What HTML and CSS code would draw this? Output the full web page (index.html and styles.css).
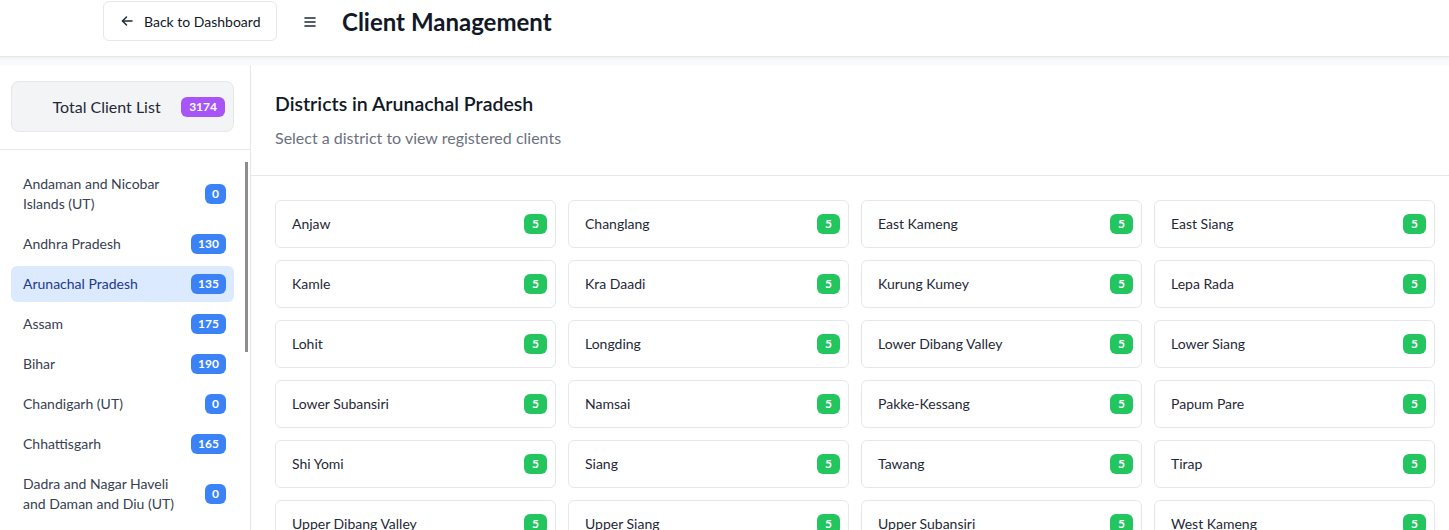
FILE: index.html
```html
<!DOCTYPE html>
<html lang="en">
<head>
<meta charset="utf-8">
<title>Client Management</title>
<link rel="stylesheet" href="styles.css">
</head>
<body>
<header class="topbar">
  <button class="back-btn" type="button">
    <svg class="back-icon" width="12" height="12" viewBox="0 0 12 12" fill="none" stroke="#1f2937" stroke-width="1.5" stroke-linecap="round" stroke-linejoin="round"><path d="M11 6H1.5"/><path d="M5.5 2L1.5 6l4 4"/></svg>
    <span>Back to Dashboard</span>
  </button>
  <svg class="menu-icon" width="14" height="14" viewBox="0 0 14 14" fill="none" stroke="#1f2937" stroke-width="1.6" stroke-linecap="round"><path d="M2 3h10"/><path d="M2 7h10"/><path d="M2 11h10"/></svg>
  <h1 class="page-title">Client Management</h1>
</header>

<div class="layout">
  <aside class="sidebar">
    <div class="total-wrap">
      <div class="total-card">
        <span class="total-label">Total Client List</span>
        <span class="badge badge-purple">3174</span>
      </div>
    </div>
    <div class="list-wrap">
      <nav class="state-list">
        <div class="state-item"><span class="state-name">Andaman and Nicobar Islands (UT)</span><span class="badge badge-blue">0</span></div>
        <div class="state-item"><span class="state-name">Andhra Pradesh</span><span class="badge badge-blue">130</span></div>
        <div class="state-item active"><span class="state-name">Arunachal Pradesh</span><span class="badge badge-blue">135</span></div>
        <div class="state-item"><span class="state-name">Assam</span><span class="badge badge-blue">175</span></div>
        <div class="state-item"><span class="state-name">Bihar</span><span class="badge badge-blue">190</span></div>
        <div class="state-item"><span class="state-name">Chandigarh (UT)</span><span class="badge badge-blue">0</span></div>
        <div class="state-item"><span class="state-name">Chhattisgarh</span><span class="badge badge-blue">165</span></div>
        <div class="state-item"><span class="state-name">Dadra and Nagar Haveli and Daman and Diu (UT)</span><span class="badge badge-blue">0</span></div>
        <div class="state-item"><span class="state-name">Delhi (UT)</span><span class="badge badge-blue">0</span></div>
        <div class="state-item"><span class="state-name">Goa</span><span class="badge badge-blue">10</span></div>
        <div class="state-item"><span class="state-name">Gujarat</span><span class="badge badge-blue">165</span></div>
      </nav>
      <span class="scroll-thumb" aria-hidden="true"></span>
    </div>
  </aside>

  <main class="main">
    <section class="main-head">
      <h2 class="main-title">Districts in Arunachal Pradesh</h2>
      <p class="main-sub">Select a district to view registered clients</p>
    </section>
    <section class="district-grid">
      <div class="district"><span>Anjaw</span><span class="badge badge-green">5</span></div>
      <div class="district"><span>Changlang</span><span class="badge badge-green">5</span></div>
      <div class="district"><span>East Kameng</span><span class="badge badge-green">5</span></div>
      <div class="district"><span>East Siang</span><span class="badge badge-green">5</span></div>
      <div class="district"><span>Kamle</span><span class="badge badge-green">5</span></div>
      <div class="district"><span>Kra Daadi</span><span class="badge badge-green">5</span></div>
      <div class="district"><span>Kurung Kumey</span><span class="badge badge-green">5</span></div>
      <div class="district"><span>Lepa Rada</span><span class="badge badge-green">5</span></div>
      <div class="district"><span>Lohit</span><span class="badge badge-green">5</span></div>
      <div class="district"><span>Longding</span><span class="badge badge-green">5</span></div>
      <div class="district"><span>Lower Dibang Valley</span><span class="badge badge-green">5</span></div>
      <div class="district"><span>Lower Siang</span><span class="badge badge-green">5</span></div>
      <div class="district"><span>Lower Subansiri</span><span class="badge badge-green">5</span></div>
      <div class="district"><span>Namsai</span><span class="badge badge-green">5</span></div>
      <div class="district"><span>Pakke-Kessang</span><span class="badge badge-green">5</span></div>
      <div class="district"><span>Papum Pare</span><span class="badge badge-green">5</span></div>
      <div class="district"><span>Shi Yomi</span><span class="badge badge-green">5</span></div>
      <div class="district"><span>Siang</span><span class="badge badge-green">5</span></div>
      <div class="district"><span>Tawang</span><span class="badge badge-green">5</span></div>
      <div class="district"><span>Tirap</span><span class="badge badge-green">5</span></div>
      <div class="district"><span>Upper Dibang Valley</span><span class="badge badge-green">5</span></div>
      <div class="district"><span>Upper Siang</span><span class="badge badge-green">5</span></div>
      <div class="district"><span>Upper Subansiri</span><span class="badge badge-green">5</span></div>
      <div class="district"><span>West Kameng</span><span class="badge badge-green">5</span></div>
    </section>
  </main>
</div>
</body>
</html>
```

FILE: styles.css
```css
* { box-sizing: border-box; }

html, body {
  margin: 0;
  height: 100%;
  overflow: hidden;
}

body {
  font-family: Lato, "Noto Sans", sans-serif;
  background: #f9fafb;
  color: #1f2937;
}

.topbar {
  height: 57px;
  background: #ffffff;
  border-bottom: 1px solid #e5e7eb;
  box-shadow: 0 1px 3px rgba(0, 0, 0, 0.06);
  display: flex;
  align-items: flex-start;
  padding: 1px 0 0 103px;
  position: relative;
  z-index: 2;
}

.back-btn {
  display: flex;
  align-items: center;
  gap: 11px;
  height: 40px;
  width: 174px;
  padding: 0 0 0 17px;
  background: #ffffff;
  border: 1px solid #e5e7eb;
  border-radius: 6px;
  font-family: inherit;
  font-size: 14px;
  color: #111827;
  white-space: nowrap;
}

.back-icon { flex: none; }

.menu-icon {
  margin: 14px 0 0 26px;
  flex: none;
}

.page-title {
  margin: 5px 0 0 25px;
  font-size: 24px;
  line-height: 32px;
  font-weight: 700;
  color: #111827;
}

.layout {
  display: flex;
  height: calc(100% - 65px);
  margin-top: 8px;
}

.sidebar {
  width: 251px;
  flex: none;
  background: #ffffff;
  border-right: 1px solid #e5e7eb;
  display: flex;
  flex-direction: column;
}

.total-wrap {
  padding: 16px 16px 17px 11px;
  border-bottom: 1px solid #e5e7eb;
}

.total-card {
  display: flex;
  align-items: center;
  gap: 8px;
  height: 51px;
  padding: 0 8px 0 28px;
  background: #f3f4f6;
  border: 1px solid #e5e7eb;
  border-radius: 8px;
}

.total-label {
  flex: 1;
  text-align: center;
  font-size: 16px;
  color: #1f2937;
}

.list-wrap {
  flex: 1;
  position: relative;
  min-height: 0;
}

.state-list {
  height: 100%;
  overflow: hidden;
  padding: 16px 16px 16px 11px;
  display: flex;
  flex-direction: column;
  gap: 4px;
}

.scroll-thumb {
  position: absolute;
  top: 12px;
  right: 2px;
  width: 3px;
  height: 190px;
  background: #8d8d8d;
}

.state-item {
  display: flex;
  align-items: center;
  gap: 8px;
  padding: 8px 8px 8px 12px;
  border-radius: 6px;
  font-size: 14px;
  line-height: 20px;
  color: #374151;
  flex: none;
}

.state-item.active {
  background: #dbeafe;
  color: #1e3a8a;
}

.state-name {
  flex: 1;
  max-width: 160px;
}

.state-item .badge { margin-left: auto; }

.badge {
  flex: none;
  display: inline-block;
  padding: 2px 7px;
  border-radius: 6px;
  font-size: 12px;
  line-height: 16px;
  font-weight: 700;
  color: #ffffff;
}

.badge-purple { background: #a855f7; padding: 2px 8px; }
.badge-blue { background: #3b82f6; }
.badge-green { background: #22c55e; padding: 2px 8px; }

.main {
  flex: 1;
  background: #ffffff;
  overflow: hidden;
}

.main-head {
  padding: 25px 24px 25px 24px;
  border-bottom: 1px solid #e5e7eb;
}

.main-title {
  margin: 0;
  font-size: 19.5px;
  line-height: 28px;
  font-weight: 600;
  color: #111827;
}

.main-sub {
  margin: 8px 0 0;
  font-size: 16px;
  line-height: 24px;
  color: #6b7280;
}

.district-grid {
  display: grid;
  grid-template-columns: repeat(4, 1fr);
  gap: 12px;
  padding: 24px 14px 24px 24px;
}

.district {
  display: flex;
  align-items: center;
  justify-content: space-between;
  height: 48px;
  padding: 0 8px 1px 16px;
  border: 1px solid #e5e7eb;
  border-radius: 6px;
  font-size: 14px;
  color: #1f2937;
}
```
